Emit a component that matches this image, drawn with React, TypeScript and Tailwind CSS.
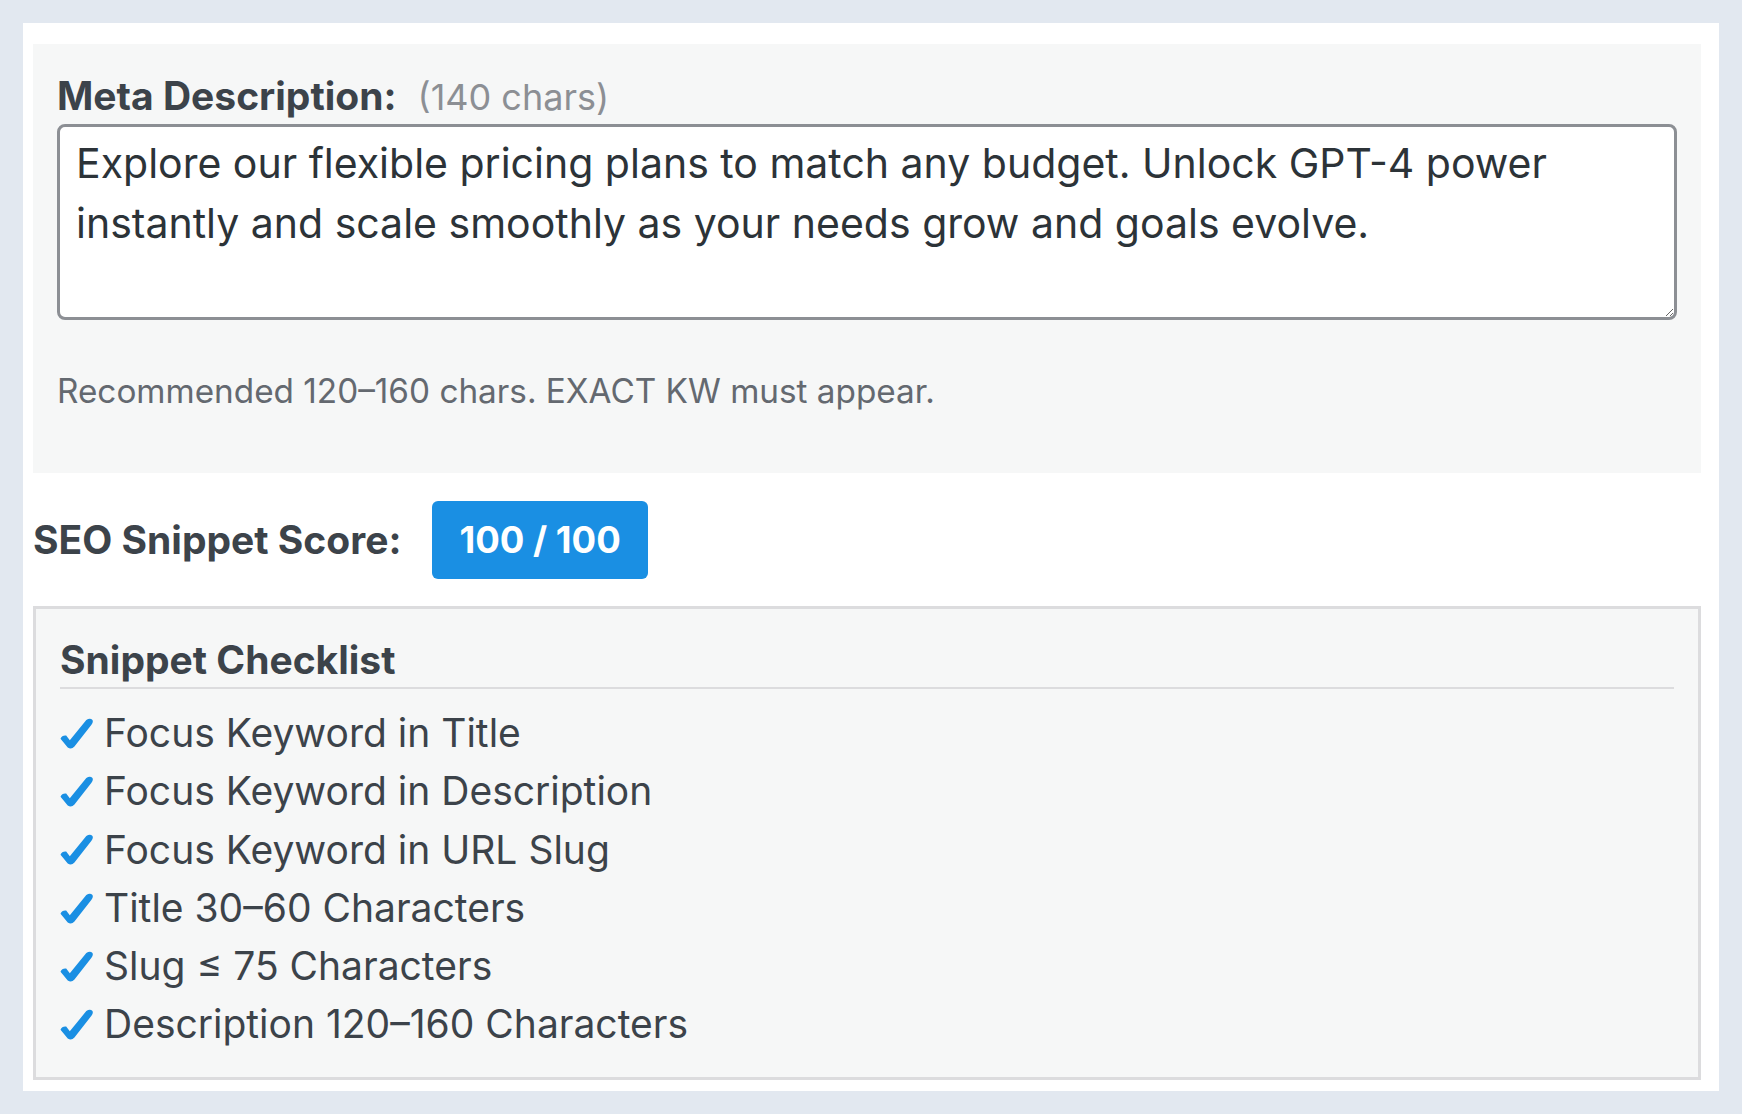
import React from 'react';

const checks = [
  'Focus Keyword in Title',
  'Focus Keyword in Description',
  'Focus Keyword in URL Slug',
  'Title 30–60 Characters',
  'Slug ≤ 75 Characters',
  'Description 120–160 Characters',
];

const CheckMark = () => (
  <svg width="33" height="31" viewBox="0 0 32 30" className="shrink-0">
    <path
      d="M0.5 20 Q2 16.5 6 17 L9.5 21.5 L25.5 2 Q29 -0.5 31.5 1.8 Q32.5 4 30.5 6.5 L14 27.5 Q11 31 7.5 28.5 Z"
      fill="#1a8fe3"
    />
  </svg>
);

const SeoSnippetPanel = () => {
  return (
    <div className="min-h-screen bg-[#e2e8f0] px-[23px] pt-[23px] pb-[23px] font-['Inter',sans-serif]">
      <div className="bg-white pl-[10px] pr-[18px] pt-[21px] pb-[11px]">
        {/* Meta description */}
        <div className="bg-[#f6f7f7] px-[24px] pt-[28px] pb-[62px]">
          <div className="flex items-baseline gap-[21px] h-[48px] leading-[48px] mb-[4px]">
            <span className="text-[39px] font-bold text-[#3c434a]">Meta Description:</span>
            <span className="text-[36px] text-[#8c8f94]">(140 chars)</span>
          </div>
          <textarea
            readOnly
            defaultValue="Explore our flexible pricing plans to match any budget. Unlock GPT-4 power instantly and scale smoothly as your needs grow and goals evolve."
            className="block w-full h-[196px] bg-white border-[3px] border-[#8c8f94] rounded-[8px] pl-[16px] pr-[16px] pt-[6px] text-[41px] leading-[60px] text-[#2c3338] font-['Inter',sans-serif] outline-none"
          />
          <p className="mt-[51px] text-[33.3px] leading-[40px] text-[#646970]">
            Recommended 120–160 chars. EXACT KW must appear.
          </p>
        </div>

        {/* Score */}
        <div className="flex items-center gap-[31px] mt-[28px]">
          <span className="text-[39px] font-bold text-[#3c434a]">SEO Snippet Score:</span>
          <span className="h-[78px] px-[27px] flex items-center rounded-[6px] bg-[#1a8fe3] text-white text-[36.5px] font-bold">
            100 / 100
          </span>
        </div>

        {/* Checklist */}
        <div className="mt-[27px] border-[3px] border-[#dcdcde] bg-[#f6f7f7] px-[24px] pt-[27px] pb-[23px]">
          <h3 className="text-[39px] leading-[48px] font-bold text-[#3c434a] pb-[3px] border-b-2 border-[#dcdcde]">
            Snippet Checklist
          </h3>
          <ul className="mt-[15px]">
            {checks.map((c) => (
              <li key={c} className="flex items-center gap-[11px] h-[58.3px] text-[39px] text-[#3c434a]">
                <CheckMark />
                <span>{c}</span>
              </li>
            ))}
          </ul>
        </div>
      </div>
    </div>
  );
};

export default SeoSnippetPanel;
